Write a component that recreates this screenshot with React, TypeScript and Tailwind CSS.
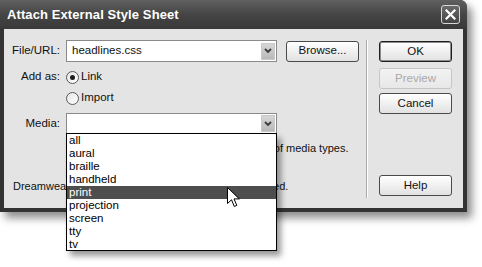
const mediaTypes = ['all', 'aural', 'braille', 'handheld', 'print', 'projection', 'screen', 'tty', 'tv'];

function ArrowButton() {
  return (
    <div className="w-[14px] h-[17px] mr-[1px] flex items-center justify-center bg-gradient-to-b from-[#d6d6d6] to-[#b9b9b9] border border-[#c9c9c9]">
      <svg width="8" height="6" viewBox="0 0 8 6">
        <path d="M1 1 L4 4 L7 1" fill="none" stroke="#3a3a3a" strokeWidth="1.8" />
      </svg>
    </div>
  );
}

function Button({ label, kind }: { label: string; kind?: 'default' | 'disabled' }) {
  const base = 'w-[73px] h-[21px] rounded-[3px] flex items-center justify-center text-[11.5px] bg-gradient-to-b';
  if (kind === 'default')
    return (
      <div className={`${base} border border-[#1e1e1e] shadow-[inset_0_0_0_1px_#8c8c8c] from-white to-[#e2e2e2] text-[#111]`}>
        {label}
      </div>
    );
  if (kind === 'disabled')
    return (
      <div className={`${base} border border-[#c6c6c6] from-[#f2f2f2] to-[#e8e8e8] text-[#a9a9a9]`}>{label}</div>
    );
  return (
    <div className={`${base} border border-[#4a4a4a] from-white to-[#e2e2e2] text-[#111]`}>{label}</div>
  );
}

function Radio({ checked }: { checked?: boolean }) {
  return (
    <div className="w-[13px] h-[13px] rounded-full border border-[#5a5a5a] bg-gradient-to-br from-[#e6e6e6] to-white flex items-center justify-center">
      {checked && <div className="w-[5px] h-[5px] rounded-full bg-[#1c1c1c]" />}
    </div>
  );
}

export default function App() {
  return (
    <div className="relative w-[482px] h-[267px] bg-white overflow-hidden text-[#111] font-['Liberation_Sans',Arial,sans-serif]">
      {/* dialog window */}
      <div className="w-[467px] h-[212px] flex flex-col bg-[#333] rounded-tr-[7px] shadow-[5px_6px_9px_rgba(0,0,0,0.45)]">
        <div className="h-[29px] shrink-0 flex items-center justify-between pl-[7px] pr-[7px] rounded-tr-[7px] bg-gradient-to-b from-[#606060] via-[#454545] to-[#393939]">
          <span className="text-white font-bold text-[13px] tracking-[0.1px]">Attach External Style Sheet</span>
          <div className="w-[19px] h-[19px] rounded-[3px] border border-[#d8d8d8] bg-gradient-to-b from-[#6a6a6a] to-[#454545] flex items-center justify-center">
            <svg width="11" height="11" viewBox="0 0 11 11">
              <path d="M1.5 1.5 L9.5 9.5 M9.5 1.5 L1.5 9.5" stroke="white" strokeWidth="2.2" strokeLinecap="square" />
            </svg>
          </div>
        </div>

        <div className="flex-1 mx-[4px] mb-[4px] bg-[#e4e4e4] flex">
          {/* form area */}
          <div className="w-[362px] pt-[11px] flex flex-col text-[11.5px]">
            <div className="h-[22px] flex items-center">
              <span className="w-[56px] text-right">File/URL:</span>
              <div className="ml-[6px] w-[211px] h-[22px] bg-white border border-[#8a8a8a] flex items-center justify-between">
                <span className="pl-[5px]">headlines.css</span>
                <ArrowButton />
              </div>
              <div className="ml-[9px]">
                <Button label="Browse..." />
              </div>
            </div>

            <div className="mt-[8px] h-[14px] flex items-center">
              <span className="w-[56px] text-right">Add as:</span>
              <div className="ml-[6px] flex items-center gap-[2px]">
                <Radio checked />
                <span>Link</span>
              </div>
            </div>

            <div className="mt-[7px] h-[14px] flex items-center pl-[62px] gap-[2px]">
              <Radio />
              <span>Import</span>
            </div>

            <div className="mt-[8px] h-[21px] flex items-center">
              <span className="w-[56px] text-right">Media:</span>
              <div className="ml-[6px] w-[211px] h-[21px] bg-white border border-[#8a8a8a] flex items-center justify-end">
                <ArrowButton />
              </div>
            </div>

            <div className="mt-[7px] h-[14px] pl-[63px] whitespace-nowrap leading-[14px] text-[11px]">
              You may also use a comma-separated list of media types.
            </div>

            <div className="mt-[24px] h-[14px] pl-[9px] whitespace-nowrap leading-[14px] text-[11px]">
              Dreamweaver's sample style sheets can get you started.
            </div>
          </div>

          <div className="mt-[11px] h-[158px] w-[2px] border-l border-[#a9a9a9] border-r border-r-white" />

          {/* buttons */}
          <div className="ml-[11px] pt-[12px] flex flex-col">
            <Button label="OK" kind="default" />
            <div className="mt-[6px]">
              <Button label="Preview" kind="disabled" />
            </div>
            <div className="mt-[4px]">
              <Button label="Cancel" />
            </div>
            <div className="mt-[61px]">
              <Button label="Help" />
            </div>
          </div>
        </div>
      </div>

      {/* open media list */}
      <div className="absolute left-[66px] top-[133px] w-[211px] h-[118px] bg-white border border-black shadow-[4px_5px_6px_rgba(0,0,0,0.4)] text-[11.5px]">
        {mediaTypes.map((m) => (
          <div
            key={m}
            className={`h-[13px] leading-[13px] pl-[2px] ${m === 'print' ? 'bg-[#4e4e4e] text-white' : 'text-black'}`}
          >
            {m}
          </div>
        ))}
      </div>

      {/* mouse pointer */}
      <svg className="absolute left-[227px] top-[187px]" width="14" height="22" viewBox="0 0 14 22">
        <path d="M0.5 0.5 L0.5 16.5 L4.5 12.8 L7.3 19.5 L9.8 18.4 L7 11.9 L12.3 11.9 Z" fill="white" stroke="black" strokeWidth="1" />
      </svg>
    </div>
  );
}
